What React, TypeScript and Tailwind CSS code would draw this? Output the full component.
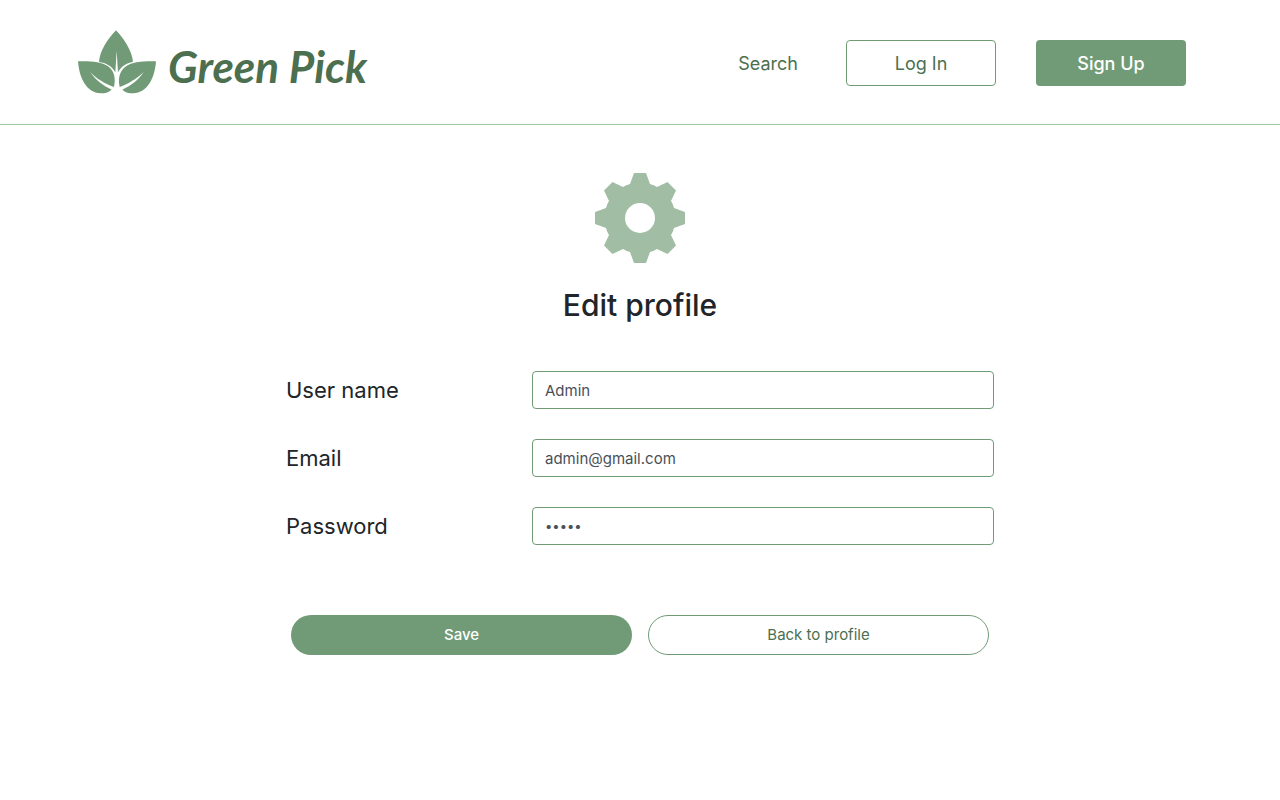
import { useState } from "react";

function LeafMark() {
  return (
    <svg viewBox="24 30 234 190" className="h-16 w-[78px]" fill="#709b76" aria-hidden="true">
      <path d="M138 30C112 58 90 90 87 125C108 127 126 138 136 156L140 92L144 156C153 138 168 129 189 124C185 90 164 58 138 30Z" />
      <path d="M24 123C60 122 95 124 114 138C135 152 137 178 132 200C105 190 80 176 60 155C78 180 100 196 125 208C115 217 105 219 92 219C50 217 28 175 24 123Z" />
      <path d="M258 123C222 122 187 124 168 138C147 152 144 178 149 200C175 190 200 176 221 155C205 180 182 196 157 208C165 217 177 219 190 219C232 217 254 175 258 123Z" />
    </svg>
  );
}

function GearIcon() {
  return (
    <svg viewBox="0 0 90 90" className="size-[90px]" fill="#a1bea4" aria-hidden="true">
      <path
        fillRule="evenodd"
        d="M39 0H51L55 11Q59 12 62 14L72.500 9L81 17.500L76 28Q78 31 79 35L90 39V51L79 55Q78 59 76 62L81 72.500L72.500 81L62 76Q59 78 55 79L51 90H39L35 79Q31 78 28 76L17.500 81L9 72.500L14 62Q12 59 11 55L0 51V39L11 35Q12 31 14 28L9 17.500L17.500 9L28 14Q31 12 35 11ZM45 30A15 15 0 1 0 45 60A15 15 0 1 0 45 30Z"
      />
    </svg>
  );
}

type FieldProps = {
  id: string;
  label: string;
  type: string;
  initial: string;
};

function Field({ id, label, type, initial }: FieldProps) {
  const [value, setValue] = useState(initial);
  const textSize = type === "password" ? "text-[13px]" : "text-[15px]";
  return (
    <div className="grid items-center gap-2 sm:grid-cols-[246px_1fr] sm:gap-0">
      <label htmlFor={id} className="text-[22px] leading-9">
        {label}
      </label>
      <input
        id={id}
        type={type}
        value={value}
        onChange={(event) => setValue(event.target.value)}
        className={`h-[38px] w-full rounded border border-[#709b76] bg-white px-3 text-[#495057] ${textSize}`}
      />
    </div>
  );
}

export default function App() {
  return (
    <div className="font-['Inter','Liberation_Sans',sans-serif] text-[#212529]">
      <header className="flex flex-wrap items-center justify-between gap-6 border-b border-[#a3cba3] pt-[30px] pr-[94px] pb-[30px] pl-[78px]">
        <a href="#home" className="flex items-center gap-3">
          <LeafMark />
          <span className="pt-2 font-['Lato',cursive] text-[44px] leading-none font-bold text-[#4c6f50] italic">
            Green Pick
          </span>
        </a>
        <nav className="flex items-center pt-0.5 text-[18px] text-[#4c6f50]">
          <a href="#search" className="mr-12">
            Search
          </a>
          <button type="button" className="mr-10 h-[46px] w-[150px] rounded border border-[#709b76] bg-white">
            Log In
          </button>
          <button type="button" className="h-[46px] w-[150px] rounded bg-[#709b76] font-medium text-white">
            Sign Up
          </button>
        </nav>
      </header>

      <main className="mx-auto max-w-[708px] pt-12">
        <div className="flex flex-col items-center">
          <GearIcon />
          <h1 className="mt-[22px] text-[30px] leading-10 font-medium">Edit profile</h1>
        </div>
        <form onSubmit={(event) => event.preventDefault()}>
          <div className="mt-[46px] flex flex-col gap-[30px]">
            <Field id="username" label="User name" type="text" initial="Admin" />
            <Field id="email" label="Email" type="email" initial="admin@gmail.com" />
            <Field id="password" label="Password" type="password" initial="admin" />
          </div>
          <div className="mt-[70px] grid grid-cols-2 gap-4 px-[5px] text-[15px]">
            <button type="submit" className="h-10 rounded-full bg-[#709b76] font-medium text-white">
              Save
            </button>
            <button type="button" className="h-10 rounded-full border border-[#709b76] bg-white text-[#4c6f50]">
              Back to profile
            </button>
          </div>
        </form>
      </main>
    </div>
  );
}
